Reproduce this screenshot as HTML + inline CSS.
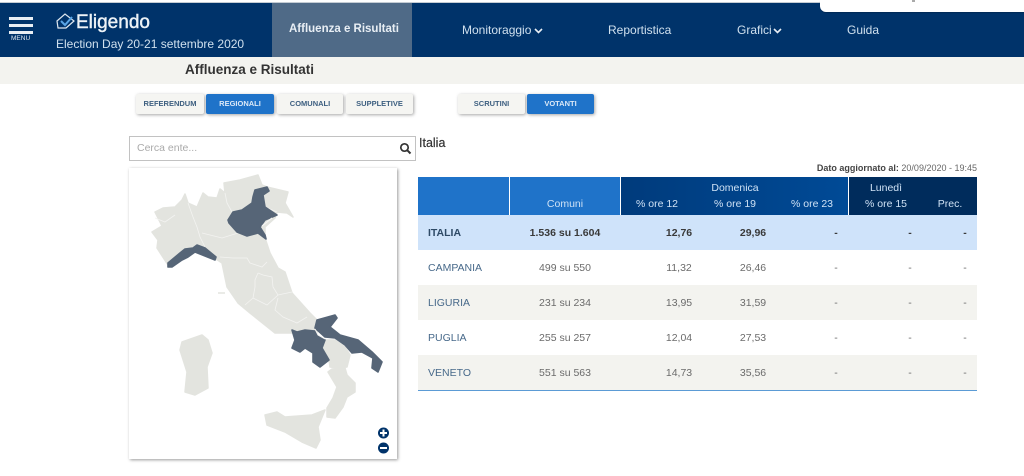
<!DOCTYPE html>
<html lang="it"><head><meta charset="utf-8"><title>Eligendo</title>
<style>
*{box-sizing:border-box}
html,body{margin:0;padding:0;background:#fff}
body{width:1024px;height:476px;position:relative;overflow:hidden;font-family:"Liberation Sans",sans-serif;color:#444}
#w{position:absolute;left:0;top:0;width:1024px;height:476px;overflow:hidden;filter:blur(.35px)}
.a{position:absolute;white-space:nowrap}
.btn{position:absolute;top:94px;height:20px;background:#f5f5f2;border-radius:2px;box-shadow:1px 1px 3px rgba(0,0,0,.35);font-size:7.5px;font-weight:bold;color:#3d5f80;text-align:center;line-height:20px}
.on{background:#1f73c9;color:#dce9f7}
.nav{position:absolute;top:23px;font-size:12px;color:#cfe0ee;white-space:nowrap}
.th{position:absolute;color:#cfe2f5;font-size:10.5px;white-space:nowrap;transform:translateX(-50%)}
.row{position:absolute;left:418px;width:559px;height:35px}
.row span{position:absolute;top:12px;font-size:10.5px;color:#6b6b6b;white-space:nowrap;transform:translateX(-50%)}
.row span.n{left:10px;transform:none;color:#47698a}
.row.b span{font-weight:bold;color:#3a3a3a}
.row.b span.n{color:#2e4a66}
</style></head><body>
<div id="w">
<div class="a" style="left:0;top:3px;width:1024px;height:54px;background:#00336a"></div>
<div class="a" style="left:0;top:2px;width:1024px;height:1px;background:#c4ccd4"></div>
<div class="a" style="left:820px;top:0;width:204px;height:12px;background:#fff;border-radius:0 0 0 6px;box-shadow:0 1px 1px rgba(0,0,0,.2)"></div>
<div class="a" style="left:912px;top:0;width:3px;height:2px;background:#aaa"></div>
<div class="a" style="left:272px;top:3px;width:140px;height:54px;background:#4f6a87"></div>

<div class="a" style="left:9px;top:17px;width:24px;height:3px;background:#e8eef4"></div>
<div class="a" style="left:9px;top:24px;width:24px;height:3px;background:#e8eef4"></div>
<div class="a" style="left:9px;top:31px;width:24px;height:3px;background:#e8eef4"></div>
<div class="a" style="left:11px;top:35px;font-size:6.5px;color:#dfe8f0">MENU</div>

<svg class="a" style="left:56px;top:13px" width="20" height="16" viewBox="0 0 20 16"><path d="M1 8L9 1L18 8L10 15H2Z" fill="none" stroke="#dfe8f0" stroke-width="1.2"/><path d="M5 8L9 12L16 4" fill="none" stroke="#5aa5e6" stroke-width="2"/></svg>
<div class="a" style="left:76px;top:12px;font-size:19px;color:#eef3f7;-webkit-text-stroke:.4px #eef3f7">Eligendo</div>
<div class="a" style="left:56px;top:37px;font-size:12px;color:#cfe0ee">Election Day 20-21 settembre 2020</div>

<div class="nav" style="left:289px;font-weight:bold;font-size:11.5px;color:#e8eef4">Affluenza e Risultati</div>
<div class="nav" style="left:462px">Monitoraggio</div>
<svg class="a" style="left:534px;top:28px" width="9" height="6"><path d="M1 1L4.500 4.500L8 1" fill="none" stroke="#e8eef4" stroke-width="1.6"/></svg>
<div class="nav" style="left:608px">Reportistica</div>
<div class="nav" style="left:737px">Grafici</div>
<svg class="a" style="left:773px;top:28px" width="9" height="6"><path d="M1 1L4.500 4.500L8 1" fill="none" stroke="#e8eef4" stroke-width="1.6"/></svg>
<div class="nav" style="left:847px">Guida</div>

<div class="a" style="left:0;top:57px;width:1024px;height:27px;background:#f3f3ef"></div>
<div class="a" style="left:185px;top:62px;font-size:13.500px;font-weight:bold;color:#333">Affluenza e Risultati</div>

<div class="btn" style="left:136px;width:68px">REFERENDUM</div>
<div class="btn on" style="left:206px;width:68px">REGIONALI</div>
<div class="btn" style="left:277px;width:66px">COMUNALI</div>
<div class="btn" style="left:346px;width:67px">SUPPLETIVE</div>
<div class="btn" style="left:458px;width:67px">SCRUTINI</div>
<div class="btn on" style="left:527px;width:67px">VOTANTI</div>

<div class="a" style="left:129px;top:136px;width:287px;height:25px;border:1px solid #c2c2c2;background:#fff"></div>
<div class="a" style="left:137px;top:142px;font-size:10.5px;color:#aaa">Cerca ente...</div>
<svg class="a" style="left:399px;top:142px" width="13" height="13" viewBox="0 0 13 13"><circle cx="5.500" cy="5.500" r="3.700" fill="none" stroke="#333" stroke-width="1.700"/><path d="M8.200 8.200L11.500 11.500" stroke="#333" stroke-width="2"/></svg>

<div class="a" style="left:129px;top:168px;width:268px;height:291px;background:#fff;box-shadow:1px 1px 3px rgba(0,0,0,.4)"></div>
<svg class="a" style="left:0;top:0" width="1024" height="476">
<g fill="#e3e4df" stroke="#e3e4df" stroke-width="1.500" stroke-linejoin="round">
<path d="M155 212L163 208L175 207L182 200L185 194L188 203L197 207L203 193L208 197L217 198L220 189L225 193L224 183L240 180L258 175L262 185L267 187L288 192L285 203L293 217L287 213L277 212L275 218L265 227L265 238L270 253L278 268L285 272L292 293L310 313L317 320L317 335L305 330L292 333L275 333L250 313L238 303L227 287L222 263L216 259L205 250L185 251L172 260L168 265L157 248L158 240L152 232L162 226Z"/>
<path d="M325 340L335 340L345 347L350 355L347 367L338 368L330 367L329 360L322 348Z"/>
<path d="M332 369L345 368L347 375L355 383L355 392L347 397L343 407L335 418L327 417L327 408L333 398L337 387L328 372Z"/>
<path d="M265 415L277 412L285 417L312 415L325 410L318 427L320 440L316 448L302 442L285 432L267 425Z"/>
<path d="M182 342L202 335L208 340L212 353L207 367L208 388L195 395L185 392L187 372L180 350Z"/>
<path d="M218 293H225"/>
</g>
<g fill="none" stroke="#f3f3f1" stroke-width=".8">
<path d="M188 203L193 217L197 227L200 237L205 247"/>
<path d="M225 193L227 203L232 212"/>
<path d="M202 233L222 238L238 233"/>
<path d="M155 218L165 222L175 215"/>
<path d="M220 257L233 258L247 258L250 263L262 267L267 262"/>
<path d="M258 273L263 275L272 277L273 287L278 295L267 305L253 298L255 287L255 280L258 273"/>
<path d="M278 295L292 292"/>
<path d="M278 298L275 310L283 317L297 323L307 317"/>
<path d="M253 298L245 305"/>
<path d="M265 207L277 212"/>
</g>
<g fill="#566577" stroke="#566577" stroke-width="1.600" stroke-linejoin="round">
<path d="M255 190L267 187L269 191L263 195L265 207L277 215L265 220L260 227L265 235L266 239L258 233L247 236L237 232L229 223L228 220L233 212L242 210L252 203L253 197Z"/>
<path d="M168 263L180 253L185 249L193 248L197 245L205 248L216 257L215 260L205 256L195 252L188 257L182 260L172 267L168 267Z"/>
<path d="M292 330L297 332L305 330L315 331L317 335L325 340L322 348L329 360L320 367L313 362L313 353L305 348L300 352L292 348L295 340Z"/>
<path d="M317 320L335 315L337 318L330 327L340 335L358 340L372 352L382 362L378 372L372 368L373 358L362 352L352 353L345 345L335 338L325 337L315 328Z"/>
</g>
<path d="M262 226L272 218" stroke="#f4f4f2" stroke-width="1.200" fill="none"/>
<path d="M315 329L318 335L325 339" stroke="#f4f4f2" stroke-width="1" fill="none"/>
<circle cx="383.500" cy="433" r="5.500" fill="#00336a"/><path d="M380 433H387M383.500 429.500V436.500" stroke="#fff" stroke-width="2"/>
<circle cx="383.500" cy="448" r="5.500" fill="#00336a"/><path d="M380 448H387" stroke="#fff" stroke-width="2"/>
</svg>

<div class="a" style="left:419px;top:136px;font-size:12.500px;color:#333;-webkit-text-stroke:.2px #333">Italia</div>
<div class="a" style="right:47px;top:163px;font-size:9px;color:#666"><b style="color:#444">Dato aggiornato al:</b> 20/09/2020 - 19:45</div>

<div class="a" style="left:418px;top:177px;width:91px;height:38px;background:#1f73c9"></div>
<div class="a" style="left:510px;top:177px;width:110px;height:38px;background:#1f73c9"></div>
<div class="a" style="left:621px;top:177px;width:227px;height:38px;background:linear-gradient(90deg,#003b7c,#004a96)"></div>
<div class="a" style="left:849px;top:177px;width:128px;height:38px;background:#002c5c"></div>
<div class="th" style="left:565px;top:198px">Comuni</div>
<div class="th" style="left:657px;top:198px">% ore 12</div>
<div class="th" style="left:735px;top:182px">Domenica</div>
<div class="th" style="left:735px;top:198px">% ore 19</div>
<div class="th" style="left:812px;top:198px">% ore 23</div>
<div class="th" style="left:886px;top:182px">Lunedì</div>
<div class="th" style="left:886px;top:198px">% ore 15</div>
<div class="th" style="left:950px;top:198px">Prec.</div>

<div class="row b" style="top:215px;background:#cfe3fa"><span class="n">ITALIA</span><span style="left:147px">1.536 su 1.604</span><span style="left:261px">12,76</span><span style="left:335px">29,96</span><span style="left:418px">-</span><span style="left:492px">-</span><span style="left:547px">-</span></div>
<div class="row" style="top:250px"><span class="n">CAMPANIA</span><span style="left:147px">499 su 550</span><span style="left:261px">11,32</span><span style="left:335px">26,46</span><span style="left:418px">-</span><span style="left:492px">-</span><span style="left:547px">-</span></div>
<div class="row" style="top:285px;background:#f3f3ef"><span class="n">LIGURIA</span><span style="left:147px">231 su 234</span><span style="left:261px">13,95</span><span style="left:335px">31,59</span><span style="left:418px">-</span><span style="left:492px">-</span><span style="left:547px">-</span></div>
<div class="row" style="top:320px"><span class="n">PUGLIA</span><span style="left:147px">255 su 257</span><span style="left:261px">12,04</span><span style="left:335px">27,53</span><span style="left:418px">-</span><span style="left:492px">-</span><span style="left:547px">-</span></div>
<div class="row" style="top:355px;background:#f3f3ef"><span class="n">VENETO</span><span style="left:147px">551 su 563</span><span style="left:261px">14,73</span><span style="left:335px">35,56</span><span style="left:418px">-</span><span style="left:492px">-</span><span style="left:547px">-</span></div>
<div class="a" style="left:418px;top:390px;width:559px;height:1px;background:#5b9bd5"></div>
</div>
</body></html>
